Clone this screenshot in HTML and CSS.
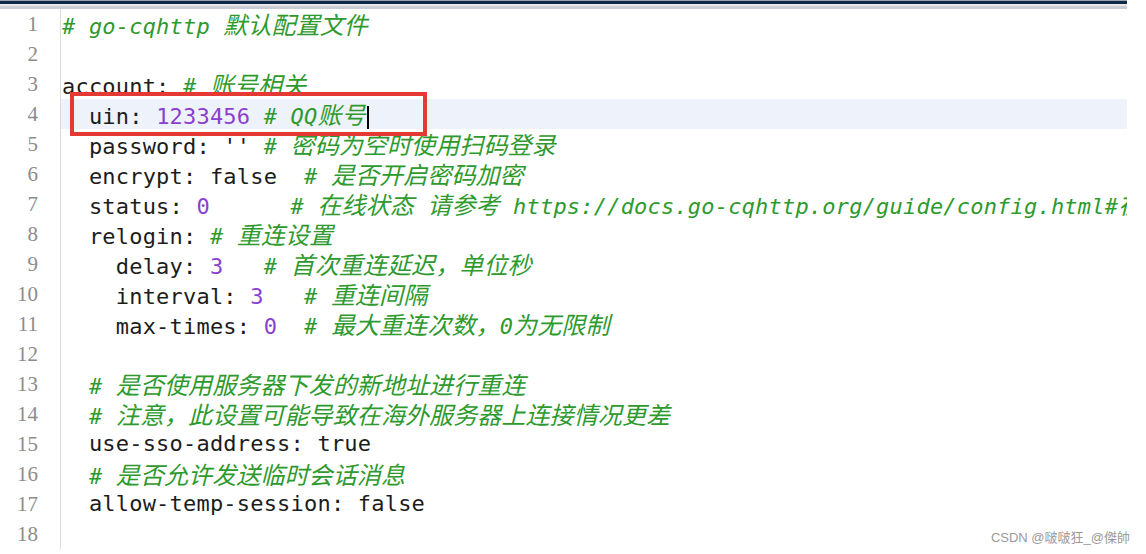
FILE: index.html
```html
<!DOCTYPE html>
<html lang="zh-CN">
<head>
<meta charset="utf-8">
<title>go-cqhttp config</title>
<link rel="stylesheet" href="styles.css">
</head>
<body>
<div class="frame">
  <div class="topbar"></div>
  <div class="editor">
    <div class="row"><span class="ln">1</span><span class="code"><span class="c"># go-cqhttp <span class="zh">默认配置文件</span></span></span></div>
    <div class="row"><span class="ln">2</span><span class="code"></span></div>
    <div class="row"><span class="ln">3</span><span class="code">account: <span class="c"># <span class="zh">账号相关</span></span></span></div>
    <div class="row current"><span class="ln">4</span><span class="code">  uin: <span class="n">1233456</span> <span class="c"># QQ<span class="zh">账号</span></span><span class="caret"></span></span></div>
    <div class="row"><span class="ln">5</span><span class="code">  password: '' <span class="c"># <span class="zh">密码为空时使用扫码登录</span></span></span></div>
    <div class="row"><span class="ln">6</span><span class="code">  encrypt: false  <span class="c"># <span class="zh">是否开启密码加密</span></span></span></div>
    <div class="row"><span class="ln">7</span><span class="code">  status: <span class="n">0</span>      <span class="c"># <span class="zh">在线状态</span> <span class="zh">请参考</span> https://docs.go-cqhttp.org/guide/config.html#<span class="zh">在线状态</span></span></span></div>
    <div class="row"><span class="ln">8</span><span class="code">  relogin: <span class="c"># <span class="zh">重连设置</span></span></span></div>
    <div class="row"><span class="ln">9</span><span class="code">    delay: <span class="n">3</span>   <span class="c"># <span class="zh">首次重连延迟，单位秒</span></span></span></div>
    <div class="row"><span class="ln">10</span><span class="code">    interval: <span class="n">3</span>   <span class="c"># <span class="zh">重连间隔</span></span></span></div>
    <div class="row"><span class="ln">11</span><span class="code">    max-times: <span class="n">0</span>  <span class="c"># <span class="zh">最大重连次数，</span>0<span class="zh">为无限制</span></span></span></div>
    <div class="row"><span class="ln">12</span><span class="code"></span></div>
    <div class="row"><span class="ln">13</span><span class="code">  <span class="c"># <span class="zh">是否使用服务器下发的新地址进行重连</span></span></span></div>
    <div class="row"><span class="ln">14</span><span class="code">  <span class="c"># <span class="zh">注意，此设置可能导致在海外服务器上连接情况更差</span></span></span></div>
    <div class="row"><span class="ln">15</span><span class="code">  use-sso-address: true</span></div>
    <div class="row"><span class="ln">16</span><span class="code">  <span class="c"># <span class="zh">是否允许发送临时会话消息</span></span></span></div>
    <div class="row"><span class="ln">17</span><span class="code">  allow-temp-session: false</span></div>
    <div class="row"><span class="ln">18</span><span class="code"></span></div>
    <div class="highlight-box"></div>
  </div>
  <div class="watermark">CSDN @啵啵狂_@傑帥</div>
</div>
</body>
</html>
```
FILE: styles.css
```css
html, body {
  margin: 0;
  padding: 0;
  background: #ffffff;
  overflow: hidden;
}
.frame {
  position: relative;
  width: 1146px;
  height: 554px;
  background: #ffffff;
}
.topbar {
  width: 1127px;
  height: 3px;
  border-top: 1px solid #9aa3ad;
  background: #0e2a46;
  border-bottom: 2px solid #e6e8eb;
  box-shadow: 0 3px 0 #c9cdd2;
}
.editor {
  position: relative;
  width: 1127px;
  margin-top: 3px;
  overflow: hidden;
}
.row {
  display: flex;
  height: 30px;
  align-items: center;
  white-space: pre;
}
.row.current .code {
  background: #eef2fa;
}
.ln {
  flex: 0 0 38px;
  width: 38px;
  padding-right: 22px;
  text-align: right;
  font-family: "Liberation Serif", "DejaVu Serif", serif;
  font-size: 21px;
  color: #8c8c8c;
  border-right: 1px solid #dcdcdc;
  height: 30px;
  line-height: 30px;
}
.code {
  flex: 1;
  height: 30px;
  line-height: 30px;
  padding-left: 1px;
  font-family: "DejaVu Sans Mono", "Noto Sans CJK SC", monospace;
  font-size: 22px;
  letter-spacing: 0.2px;
  color: #1c1c1c;
  overflow: hidden;
}
.c {
  color: #2e9a2e;
  font-style: italic;
}
.n {
  color: #8a3fcf;
}
.zh {
  font-family: "Noto Sans CJK SC", sans-serif;
  font-size: 24px;
  letter-spacing: 0.1px;
}
.caret {
  display: inline-block;
  width: 2px;
  height: 24px;
  background: #000;
  vertical-align: middle;
  margin-left: 1px;
}
.highlight-box {
  position: absolute;
  left: 70px;
  top: 83px;
  width: 349px;
  height: 36px;
  border: 4px solid #e53935;
}
.watermark {
  position: absolute;
  right: 16px;
  bottom: 8px;
  font-family: "Liberation Sans", "Noto Sans CJK SC", sans-serif;
  font-size: 13px;
  color: #9a9a9a;
}
```
